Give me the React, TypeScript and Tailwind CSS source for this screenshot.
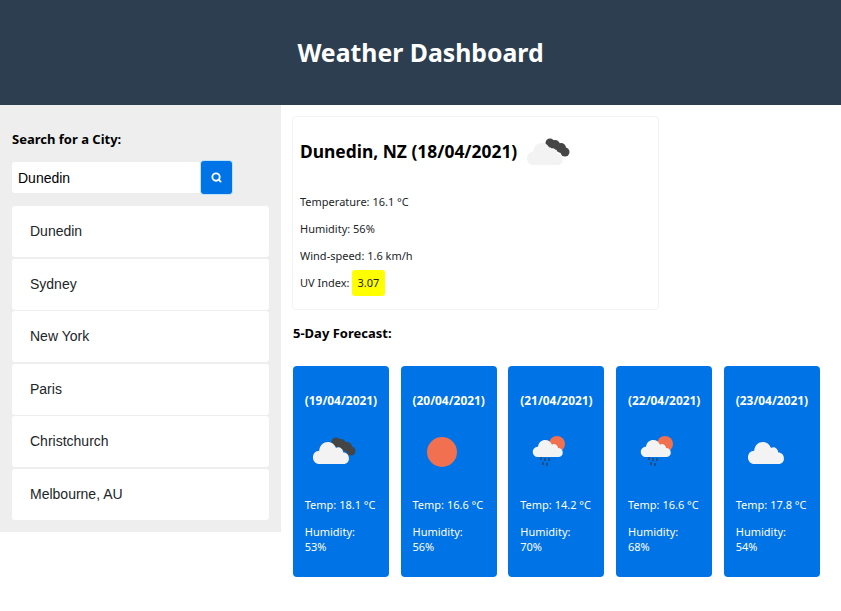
import React from 'react';
import { Search } from 'lucide-react';

const cities = ['Dunedin', 'Sydney', 'New York', 'Paris', 'Christchurch', 'Melbourne, AU'];

const forecast = [
  { date: '(19/04/2021)', temp: '18.1', humidity: '53%', icon: 'broken' },
  { date: '(20/04/2021)', temp: '16.6', humidity: '56%', icon: 'clear' },
  { date: '(21/04/2021)', temp: '14.2', humidity: '70%', icon: 'rain' },
  { date: '(22/04/2021)', temp: '16.6', humidity: '68%', icon: 'rain' },
  { date: '(23/04/2021)', temp: '17.8', humidity: '54%', icon: 'cloud' }
];

// Openweather style icons, all on a 50 x 50 box
const Cloud = ({ fill }: { fill: string }) => (
  <path
    fill={fill}
    d="M8 38 C3.5 38 1 35 1 32 C1 28.5 4 26 7.5 26 C8 21 12 18 16.5 18 C20.5 18 23.5 20 25 23.5 C26.5 22.5 29 22.5 30.5 24 C32 25 32.5 26.5 32.5 27.5 C36 27.5 38.5 29.5 38.5 33 C38.5 36 36 38 33 38 Z"
  />
);

const DarkCloud = () => (
  <g fill="#454545">
    <circle cx="27" cy="15" r="4.5" />
    <circle cx="32" cy="17" r="5" />
    <circle cx="38" cy="20" r="5" />
    <circle cx="42" cy="24" r="4.5" />
  </g>
);

function WeatherIcon({ type }: { type: string }) {
  if (type === 'clear') {
    return (
      <svg width="50" height="50" viewBox="0 0 50 50">
        <circle cx="25" cy="25" r="15" fill="#f0704f" />
      </svg>
    );
  }
  if (type === 'rain') {
    return (
      <svg width="50" height="50" viewBox="0 0 50 50">
        <circle cx="33" cy="17" r="8" fill="#f0704f" />
        <g transform="translate(8 -2.3) scale(0.8 0.85)">
          <Cloud fill="#f3f3f3" />
        </g>
        <g fill="#1f4f86">
          <rect x="16" y="30" width="2" height="3" />
          <rect x="20" y="31" width="2" height="3" />
          <rect x="24" y="31" width="2" height="3" />
          <rect x="18" y="35" width="2" height="3" />
          <rect x="22" y="36" width="2" height="3" />
        </g>
      </svg>
    );
  }
  if (type === 'cloud') {
    return (
      <svg width="50" height="50" viewBox="0 0 50 50">
        <g transform="translate(7 -4.8) scale(0.96 1.1)">
          <Cloud fill="#f3f3f3" />
        </g>
      </svg>
    );
  }
  return (
    <svg width="50" height="50" viewBox="0 0 50 50">
      <DarkCloud />
      <g transform="translate(3 -4.8) scale(0.96 1.1)">
        <Cloud fill="#f3f3f3" />
      </g>
    </svg>
  );
}

export default function App() {
  return (
    <div className="min-h-[611px] bg-white text-black font-['Noto_Sans',sans-serif]">
      {/* Header */}
      <header className="h-[105px] bg-[#2c3e50] flex items-center justify-center">
        <h1 className="text-[24.8px] font-bold text-white">Weather Dashboard</h1>
      </header>

      <div className="flex items-start">
        {/* Search */}
        <aside className="w-[281px] h-[427px] shrink-0 bg-[#eeeeee] px-3 pt-[25px]">
          <h2 className="text-[13px] font-bold leading-[19px]">Search for a City:</h2>
          <div className="flex items-center mt-[12px]">
            <input
              readOnly
              value="Dunedin"
              className="w-[189px] h-[31px] bg-white rounded-l-[3px] px-[6px] text-[14px] font-['Liberation_Sans',sans-serif] outline-none"
            />
            <button className="w-[31px] h-[33px] bg-[#0073e6] rounded-[3px] flex items-center justify-center shadow-[0_0_0_1px_#bfe3fb]">
              <Search size={11} strokeWidth={4} className="text-white" />
            </button>
          </div>
          <ul className="mt-[12px] w-[257px] flex flex-col gap-[1.5px]">
            {cities.map(city => (
              <li
                key={city}
                className="h-[51px] bg-white rounded-[3px] pl-[18px] flex items-center text-[14px] text-[#212529] font-['Liberation_Sans',sans-serif]"
              >
                {city}
              </li>
            ))}
          </ul>
        </aside>

        <main className="flex-1 pl-[11px] pt-[11px]">
          {/* Current weather */}
          <section className="w-[367px] h-[194px] border border-[#f3f3f3] rounded-[4px] pl-[7px] pt-[10px]">
            <div className="flex items-start h-[50px]">
              <h2 className="mt-[12px] text-[17.4px] leading-[24px] font-bold whitespace-nowrap">Dunedin, NZ (18/04/2021)</h2>
              <div className="ml-[6px] mt-[1px]">
                <WeatherIcon type="broken" />
              </div>
            </div>
            <div className="mt-[11px] text-[11px] leading-[27px] text-[#212529]">
              <p>Temperature: 16.1 °C</p>
              <p>Humidity: 56%</p>
              <p>Wind-speed: 1.6 km/h</p>
              <p className="flex items-center">
                UV Index:
                <span className="ml-[2px] h-[26px] px-[6px] bg-[#ffff00] rounded-[3px] flex items-center">3.07</span>
              </p>
            </div>
          </section>

          <h3 className="mt-[14px] ml-[1px] text-[13px] font-bold leading-[19px]">5-Day Forecast:</h3>

          {/* Forecast cards */}
          <div className="mt-[23px] ml-[0.75px] flex gap-[11.75px]">
            {forecast.map(day => (
              <div key={day.date} className="w-[96px] h-[211px] bg-[#0073e6] rounded-[4px] text-white px-3 pt-[26px]">
                <p className="text-[11.9px] font-bold leading-[17px] whitespace-nowrap">{day.date}</p>
                <div className="mt-[18px] ml-[4px]">
                  <WeatherIcon type={day.icon} />
                </div>
                <p className="mt-[20px] text-[11px] leading-[16px] whitespace-nowrap">Temp: {day.temp} °C</p>
                <p className="mt-[11px] text-[11px] leading-[15px]">
                  Humidity:
                  <br />
                  {day.humidity}
                </p>
              </div>
            ))}
          </div>
        </main>
      </div>
    </div>
  );
}
